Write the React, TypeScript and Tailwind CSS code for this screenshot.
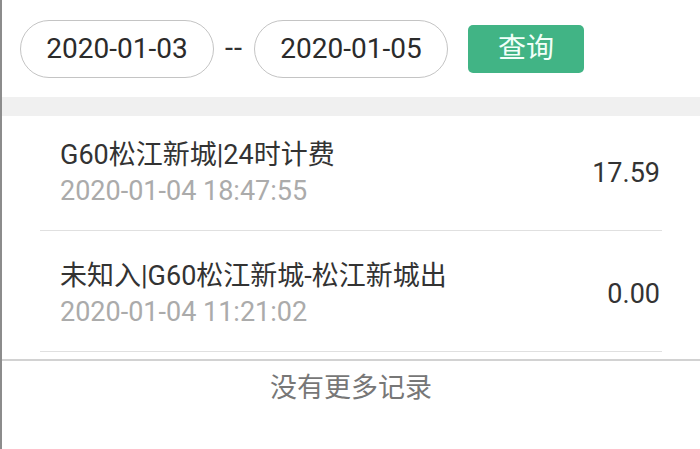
const records = [
  { title: "G60松江新城|24时计费", time: "2020-01-04 18:47:55", amount: "17.59", h: "h-[115px]" },
  { title: "未知入|G60松江新城-松江新城出", time: "2020-01-04 11:21:02", amount: "0.00", h: "h-[121px] pt-[6px]" },
];

function DatePill({ value }: { value: string }) {
  return (
    <div className="flex h-[58px] w-[194px] items-center justify-center rounded-full border-[1.5px] border-[#c4c4c4] text-[28px] text-[#2b2b2b]">
      {value}
    </div>
  );
}

export default function App() {
  return (
    <div
      className="h-[449px] w-[700px] overflow-hidden border-l-2 border-[#8c8c8c] bg-white"
      style={{ fontFamily: 'Roboto, "Noto Sans CJK SC", sans-serif' }}
    >
      <div className="flex h-[97px] items-center pl-[18px]">
        <DatePill value="2020-01-03" />
        <span className="mx-[11px] text-[29px] tracking-[1px] text-[#333]">--</span>
        <DatePill value="2020-01-05" />
        <button className="ml-[20px] flex h-[48px] w-[116px] items-center justify-center rounded-[5px] bg-[#41b485] text-[28px] text-[#f2fff9]">
          查询
        </button>
      </div>
      <div className="h-[19px] bg-[#f0f0f0]"></div>

      <div className="mx-[38px]">
        {records.map((r) => (
          <div
            key={r.time}
            className={`flex items-center justify-between border-b border-[#e0e0e0] pl-[20px] pr-[2px] ${r.h}`}
          >
            <div className="leading-[36px]">
              <div className="text-[27px] text-[#333]">{r.title}</div>
              <div className="text-[27px] text-[#ababab]">{r.time}</div>
            </div>
            <div className="text-[27px] text-[#333]">{r.amount}</div>
          </div>
        ))}
      </div>

      <div className="mt-[7px] border-t-2 border-[#d2d2d2] pt-[9px] text-center text-[27px] leading-[36px] text-[#777]">
        没有更多记录
      </div>
    </div>
  );
}
